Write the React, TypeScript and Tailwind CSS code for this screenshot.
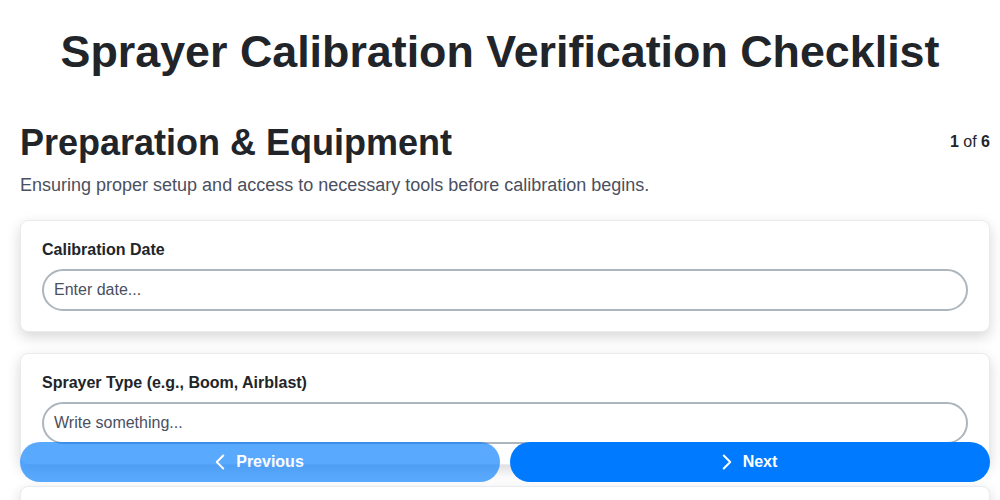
import React from "react";
import { ChevronLeft, ChevronRight } from "lucide-react";

const fields = [
  { label: "Calibration Date", placeholder: "Enter date..." },
  { label: "Sprayer Type (e.g., Boom, Airblast)", placeholder: "Write something..." },
  { label: "Nozzle Type and Size", placeholder: "Write something..." },
  { label: "Technician Name", placeholder: "Write something..." },
];

export default function App() {
  return (
    <div
      className="min-h-screen bg-white text-[#212529]"
      style={{ fontFamily: '"Liberation Sans", Arial, sans-serif' }}
    >
      <div className="pt-[25px] pb-24">
        <h1 className="text-center text-[2.8rem] font-bold leading-[1.2] text-[#212529]">
          Sprayer Calibration Verification Checklist
        </h1>
        <div className="mt-[42px] pl-5 pr-[10px]">
          <div className="flex items-center justify-between">
            <h2 className="text-4xl font-bold leading-[1.2] text-[#212529]">
              Preparation &amp; Equipment
            </h2>
            <div className="text-base text-[#212529]">
              <span className="font-bold">1</span> of <span className="font-bold">6</span>
            </div>
          </div>
          <p className="mt-[8px] text-lg leading-[27px] text-[#4a5060]">
            Ensuring proper setup and access to necessary tools before calibration begins.
          </p>
          <div className="mt-[21px] flex flex-col gap-[21px]">
            {fields.map((f) => (
              <div
                key={f.label}
                className="rounded-lg border border-[#e9ebef] bg-white px-[21px] pt-[19px] pb-5 shadow-[0_5px_14px_rgba(0,0,0,0.16)]"
              >
                <label className="mb-[10px] block text-base font-bold leading-[19px] text-[#212529]">
                  {f.label}
                </label>
                <input
                  type="text"
                  placeholder={f.placeholder}
                  className="block h-[42px] w-full rounded-full border-2 border-[#adb5bd] bg-white px-2.5 text-base text-[#212529] outline-none placeholder:text-[#4a5060]"
                  style={{ fontFamily: '"Liberation Sans", Arial, sans-serif' }}
                />
              </div>
            ))}
          </div>
        </div>
      </div>
      <div className="fixed bottom-[18px] left-5 right-[10px] flex gap-[10px]">
        <button className="flex h-10 flex-1 items-center justify-center gap-[3px] rounded-full bg-[#007bff] pr-[9px] text-base font-bold text-white opacity-65">
          <ChevronLeft size={26} strokeWidth={1.8} />
          Previous
        </button>
        <button className="flex h-10 flex-1 items-center justify-center gap-[3px] rounded-full bg-[#007bff] pr-[9px] text-base font-bold text-white">
          <ChevronRight size={26} strokeWidth={1.8} />
          Next
        </button>
      </div>
    </div>
  );
}
